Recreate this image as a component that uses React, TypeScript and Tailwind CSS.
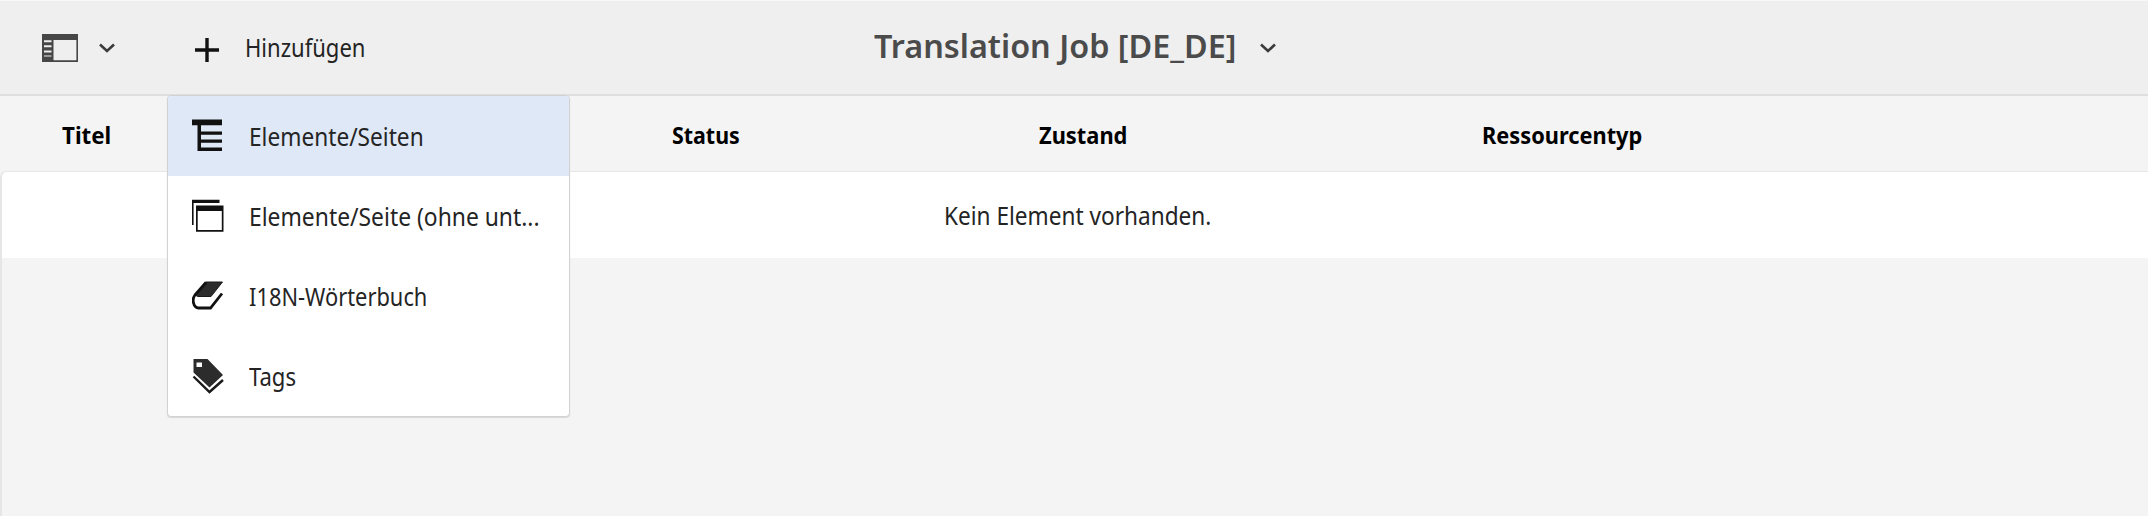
import type { ReactNode } from "react";

function Chevron() {
  return (
    <svg width="18" height="12" viewBox="0 0 18 12" fill="none" stroke="#3c3c3c" strokeWidth="2.6">
      <path d="M2 2.5 L9 9 L16 2.5" />
    </svg>
  );
}

function RailIcon() {
  return (
    <svg width="38" height="30" viewBox="0 0 38 30" fill="#464646">
      <path fillRule="evenodd" d="M1 1 H37 V29 H1 Z M12.5 7 V27.2 H35.4 V7 Z M3 7.3 V9.2 H10.5 V7.3 Z M3 12.2 V14.2 H10.5 V12.2 Z M3 17.5 V19.5 H10.5 V17.5 Z M3 22.4 V23.6 H10.5 V22.4 Z" />
    </svg>
  );
}

function PagesIcon() {
  return (
    <svg width="32" height="34" viewBox="0 0 32 34" fill="#111">
      <path d="M0 0.5 H30 V6.3 H9 V12.5 H30 V15.7 H9 V20.5 H30 V23.7 H9 V28.5 H30 V32 H5.5 V6.3 H0 Z" />
    </svg>
  );
}

function PageIcon() {
  return (
    <svg width="34" height="34" viewBox="0 0 34 34" fill="#111">
      <path d="M0 0.8 H27.5 V4 H1.6 V26 H0 Z" />
      <path fillRule="evenodd" d="M4 6.5 H31.5 V32.8 H4 Z M5.7 12 V30.9 H29.8 V12 Z" />
    </svg>
  );
}

function BookIcon() {
  return (
    <svg width="32" height="30" viewBox="0 0 32 30">
      <path d="M13.5 1 H30.5 L19 15.5 H6 L3 14 Z" fill="#2c2c2c" stroke="#1a1a1a" strokeWidth="1" />
      <path d="M14 1.5 L3 14 C-0.5 18.5 1.5 26.7 6.5 27 H18.5 L30 12.5" fill="none" stroke="#111" strokeWidth="2.8" />
    </svg>
  );
}

function TagIcon() {
  return (
    <svg width="32" height="37" viewBox="0 0 32 37">
      <path fillRule="evenodd" d="M1.5 1 H15.5 L31 17 L17.5 29.5 L1.5 14.5 Z M4.5 4.5 V9 H10 V4.5 Z" fill="#2c2c2c" />
      <path d="M1.5 18.5 L17.5 34 L31 22" fill="none" stroke="#1a1a1a" strokeWidth="2.4" />
    </svg>
  );
}

function Item({ icon, active, children }: { icon: ReactNode; active?: boolean; children: ReactNode }) {
  return (
    <li className={active ? "flex h-20 items-center bg-[#dfe8f7] pl-6" : "flex h-20 items-center pl-6"}>
      <span className="flex w-[57px] shrink-0">{icon}</span>
      {children}
    </li>
  );
}

export default function App() {
  return (
    <div className="flex h-[516px] w-[2148px] flex-col overflow-hidden bg-[#f4f4f4] font-['Noto_Sans',sans-serif] text-[24.5px] leading-8 whitespace-nowrap text-[#242424]">
      <header className="flex h-24 shrink-0 border-t border-b-2 border-t-[#f8f8f8] border-b-[#dedede] bg-[#efefef]">
        <div className="flex w-[195px] items-center pl-[41px]">
          <RailIcon />
          <span className="ml-[19px]"><Chevron /></span>
        </div>
        <div className="relative flex w-[679px] items-center">
          <svg width="24" height="24" viewBox="0 0 24 24" stroke="#111" strokeWidth="3.4" className="mt-1">
            <path d="M0 12 H24 M12 0 V24" />
          </svg>
          <span className="ml-[26px] origin-left scale-x-[0.9]">Hinzufügen</span>
          <ul className="absolute top-[94px] -left-[28px] z-10 box-content w-[401px] overflow-hidden rounded-[4px] border border-[#d2d2d2] bg-white shadow-[0_1px_1px_#d8d8d8]">
            <Item active icon={<PagesIcon />}><span className="mt-0.5 origin-left scale-x-[0.925]">Elemente/Seiten</span></Item>
            <Item icon={<PageIcon />}><span className="mt-0.5 origin-left scale-x-[0.933]">Elemente/Seite (ohne unt...</span></Item>
            <Item icon={<BookIcon />}><span className="mt-0.5 origin-left scale-x-[0.892]">I18N-Wörterbuch</span></Item>
            <Item icon={<TagIcon />}><span className="mt-0.5 origin-left scale-x-[0.9]">Tags</span></Item>
          </ul>
        </div>
        <div className="flex items-center">
          <h1 className="mb-[3px] w-[385px] text-[32.5px] font-semibold text-[#4b4b4b]"><span className="inline-block origin-left scale-x-[0.996]">Translation Job [DE_DE]</span></h1>
          <Chevron />
        </div>
      </header>
      <div className="flex h-[75px] shrink-0 items-center pt-0.5 pl-[62px] text-[23.5px] font-bold text-black">
        <span className="w-[610px]"><span className="inline-block origin-left scale-x-[0.95]">Titel</span></span>
        <span className="w-[367px]"><span className="inline-block origin-left scale-x-[0.91]">Status</span></span>
        <span className="w-[443px]"><span className="inline-block origin-left scale-x-[0.93]">Zustand</span></span>
        <span className="inline-block origin-left scale-x-[0.927]">Ressourcentyp</span>
      </div>
      <main className="flex-1 rounded-tl-[6px] border-t border-l-2 border-[#e6e6e6]">
        <div className="flex h-[86px] items-center rounded-tl-[5px] bg-white pt-0.5 pl-[942px]">
          <span className="origin-left scale-x-[0.923]">Kein Element vorhanden.</span>
        </div>
      </main>
    </div>
  );
}
